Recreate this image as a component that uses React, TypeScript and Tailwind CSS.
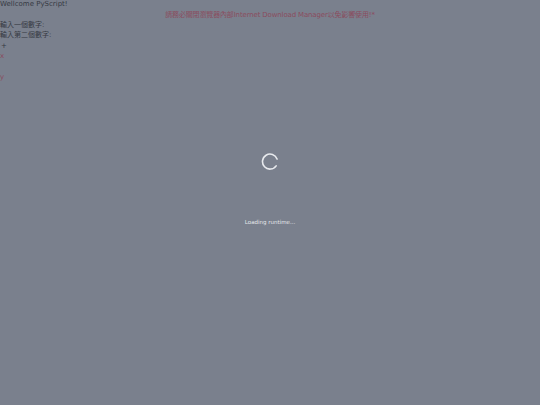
const App: React.FC = () => {
    return (
        <div className="relative w-[540px] h-[405px] overflow-hidden bg-[#7a808d] font-['DejaVu_Sans','Noto_Sans_CJK_TC',sans-serif] text-[7px] leading-[10px] text-[#363a43]">
            {/* page content under the loader */}
            <div className="flex flex-col">
                <div className="text-[7px] leading-[9px]">Wellcome PyScript!</div>
                <div className="mt-[1px] text-center tracking-[-0.15px] text-[#8a4c5e]">請務必關閉瀏覽器內部Internet Download Manager以免影響使用!*</div>
                <div>輸入一個數字:</div>
                <div>輸入第二個數字:</div>
                <div className="mt-[1px] pl-[1px]">+</div>
                <div className="text-[#8a4c5e]">x</div>
                <div className="h-[11px]"></div>
                <div className="text-[#8a4c5e]">y</div>
            </div>

            {/* loader overlay */}
            <div className="absolute inset-0 flex flex-col items-center">
                <svg className="mt-[153px]" width="18" height="18" viewBox="0 0 18 18">
                    <path d="M12.5 2.2 A7.5 7.5 0 1 0 16.2 8" fill="none" stroke="#e8eaee" strokeWidth="1.6" strokeLinecap="round" transform="rotate(40 9 9)" />
                </svg>
                <div className="mt-[47px] text-[5.5px] leading-[8px] text-[#e4e6ea]">Loading runtime...</div>
            </div>
        </div>
    );
};

export default App;
